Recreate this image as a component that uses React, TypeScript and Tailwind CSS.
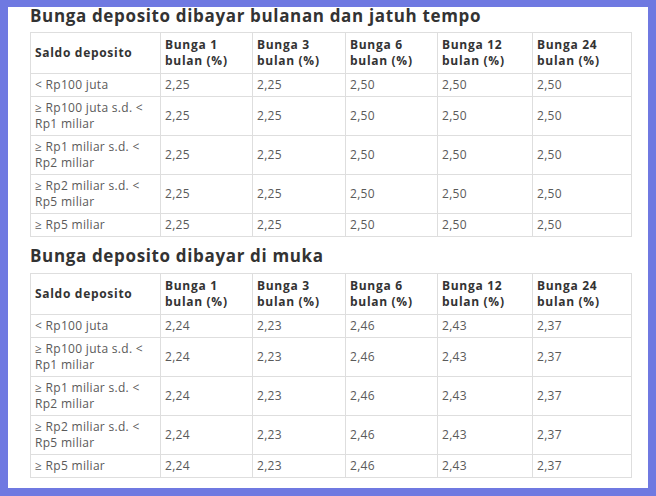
import React from "react";

const headers = ["Bunga 1 bulan (%)", "Bunga 3 bulan (%)", "Bunga 6 bulan (%)", "Bunga 12 bulan (%)", "Bunga 24 bulan (%)"];

const saldo = [
  ["< Rp100 juta"],
  ["≥ Rp100 juta s.d. <", "Rp1 miliar"],
  ["≥ Rp1 miliar s.d. <", "Rp2 miliar"],
  ["≥ Rp2 miliar s.d. <", "Rp5 miliar"],
  ["≥ Rp5 miliar"],
];

const widths = ["w-[130px]", "w-[92px]", "w-[93px]", "w-[92px]", "w-[95px]", "w-[99px]"];

function RateTable({ rates }: { rates: string[] }) {
  return (
    <table className="w-[601px] table-fixed border-collapse border border-[#dedede] text-[12px] leading-[16px]">
      <thead>
        <tr>
          <th className={`${widths[0]} border border-[#dedede] px-[4px] py-[4px] text-left align-middle font-bold text-[#333] tracking-[0.7px]`}>
            Saldo deposito
          </th>
          {headers.map((h, i) => {
            const [a, b] = h.split(" bulan");
            return (
              <th
                key={h}
                className={`${widths[i + 1]} border border-[#dedede] px-[4px] py-[4px] text-left align-middle font-bold text-[#333] tracking-[0.7px]`}>
                {a}
                <br />
                bulan{b}
              </th>
            );
          })}
        </tr>
      </thead>
      <tbody>
        {saldo.map((lines, r) => (
          <tr key={r}>
            <td className="border border-[#dedede] px-[4px] py-[3px] align-middle text-[#5a5a5a] tracking-[0.3px]">
              {lines.map((l, k) => (
                <div key={k}>{l}</div>
              ))}
            </td>
            {rates.map((v, c) => (
              <td key={c} className="border border-[#dedede] px-[4px] py-[3px] align-middle text-[#5a5a5a] tracking-[0.3px]">
                {v}
              </td>
            ))}
          </tr>
        ))}
      </tbody>
    </table>
  );
}

export default function App() {
  return (
    <div className="h-[496px] w-[656px] bg-[#6f79e1] p-[8px] pt-[7px] font-['Open_Sans',sans-serif]">
      <div className="h-[481px] w-[640px] bg-white pl-[22px]">
        <h2 className="mb-[8px] text-[17px] font-bold leading-[17px] text-[#333] tracking-[0.65px]">
          Bunga deposito dibayar bulanan dan jatuh tempo
        </h2>
        <RateTable rates={["2,25", "2,25", "2,50", "2,50", "2,50"]} />
        <h2 className="mb-[9px] mt-[10px] text-[17px] font-bold leading-[17px] text-[#333] tracking-[0.65px]">
          Bunga deposito dibayar di muka
        </h2>
        <RateTable rates={["2,24", "2,23", "2,46", "2,43", "2,37"]} />
      </div>
    </div>
  );
}
